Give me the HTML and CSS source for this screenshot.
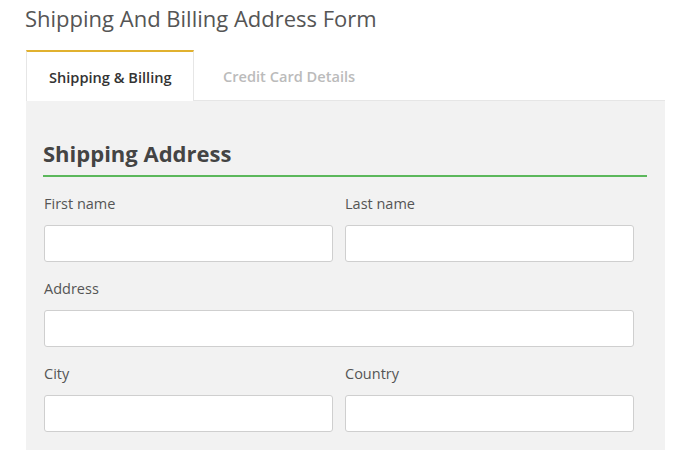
FILE: index.html
```html
<!DOCTYPE html>
<html>
<head>
<meta charset="utf-8">
<link rel="stylesheet" href="styles.css">
</head>
<body>
<div class="page">
  <h1 class="title">Shipping And Billing Address Form</h1>
  <div class="tabs">
    <div class="tab active">Shipping &amp; Billing</div>
    <div class="tab">Credit Card Details</div>
  </div>
  <div class="panel">
    <h2 class="section">Shipping Address</h2>
    <div class="grid">
      <div class="field">
        <label>First name</label>
        <div class="input"></div>
      </div>
      <div class="field">
        <label>Last name</label>
        <div class="input"></div>
      </div>
      <div class="field wide">
        <label>Address</label>
        <div class="input"></div>
      </div>
      <div class="field">
        <label>City</label>
        <div class="input"></div>
      </div>
      <div class="field">
        <label>Country</label>
        <div class="input"></div>
      </div>
    </div>
  </div>
</div>
</body>
</html>
```
FILE: styles.css
```css
html, body {
  margin: 0;
  padding: 0;
  background: #fff;
  font-family: "Open Sans", sans-serif;
}
.page {
  padding: 0 35px 0 26px;
}
.title {
  margin: 0;
  padding-top: 3px;
  margin-left: -1px;
  font-size: 22px;
  font-weight: 400;
  color: #555;
  line-height: 30px;
  height: 47px;
}
.tabs {
  display: flex;
  height: 50px;
  border-bottom: 1px solid #e6e6e6;
}
.tab {
  display: flex;
  align-items: center;
  font-size: 14.6px;
  font-weight: 600;
  color: #bbb;
  box-sizing: border-box;
  padding: 2px 0 0 29px;
}
.tab.active {
  color: #333;
  border-top: 2px solid #e1b12f;
  border-left: 1px solid #e6e6e6;
  border-right: 1px solid #e6e6e6;
  background: #fff;
  margin-bottom: -1px;
  height: 51px;
  padding: 0 21px 0 22px;
  width: 168px;
}
.panel {
  background: #f2f2f2;
  padding: 37px 18px 18px 17px;
  height: 349px;
  box-sizing: border-box;
}
.section {
  margin: 0;
  font-size: 22px;
  font-weight: 700;
  color: #444;
  line-height: 30px;
  padding-bottom: 7px;
  border-bottom: 2px solid #5cb85c;
}
.grid {
  display: grid;
  grid-template-columns: 289px 289px;
  column-gap: 12px;
  row-gap: 16px;
  margin-top: 16px;
  padding-left: 1px;
}
.field {
  display: flex;
  flex-direction: column;
}
.field.wide {
  grid-column: span 2;
}
.field label {
  font-size: 14.5px;
  color: #555;
  line-height: 22px;
  margin-bottom: 10px;
}
.input {
  height: 37px;
  background: #fff;
  border: 1px solid #cfcfcf;
  border-radius: 3px;
  box-sizing: border-box;
}
```
